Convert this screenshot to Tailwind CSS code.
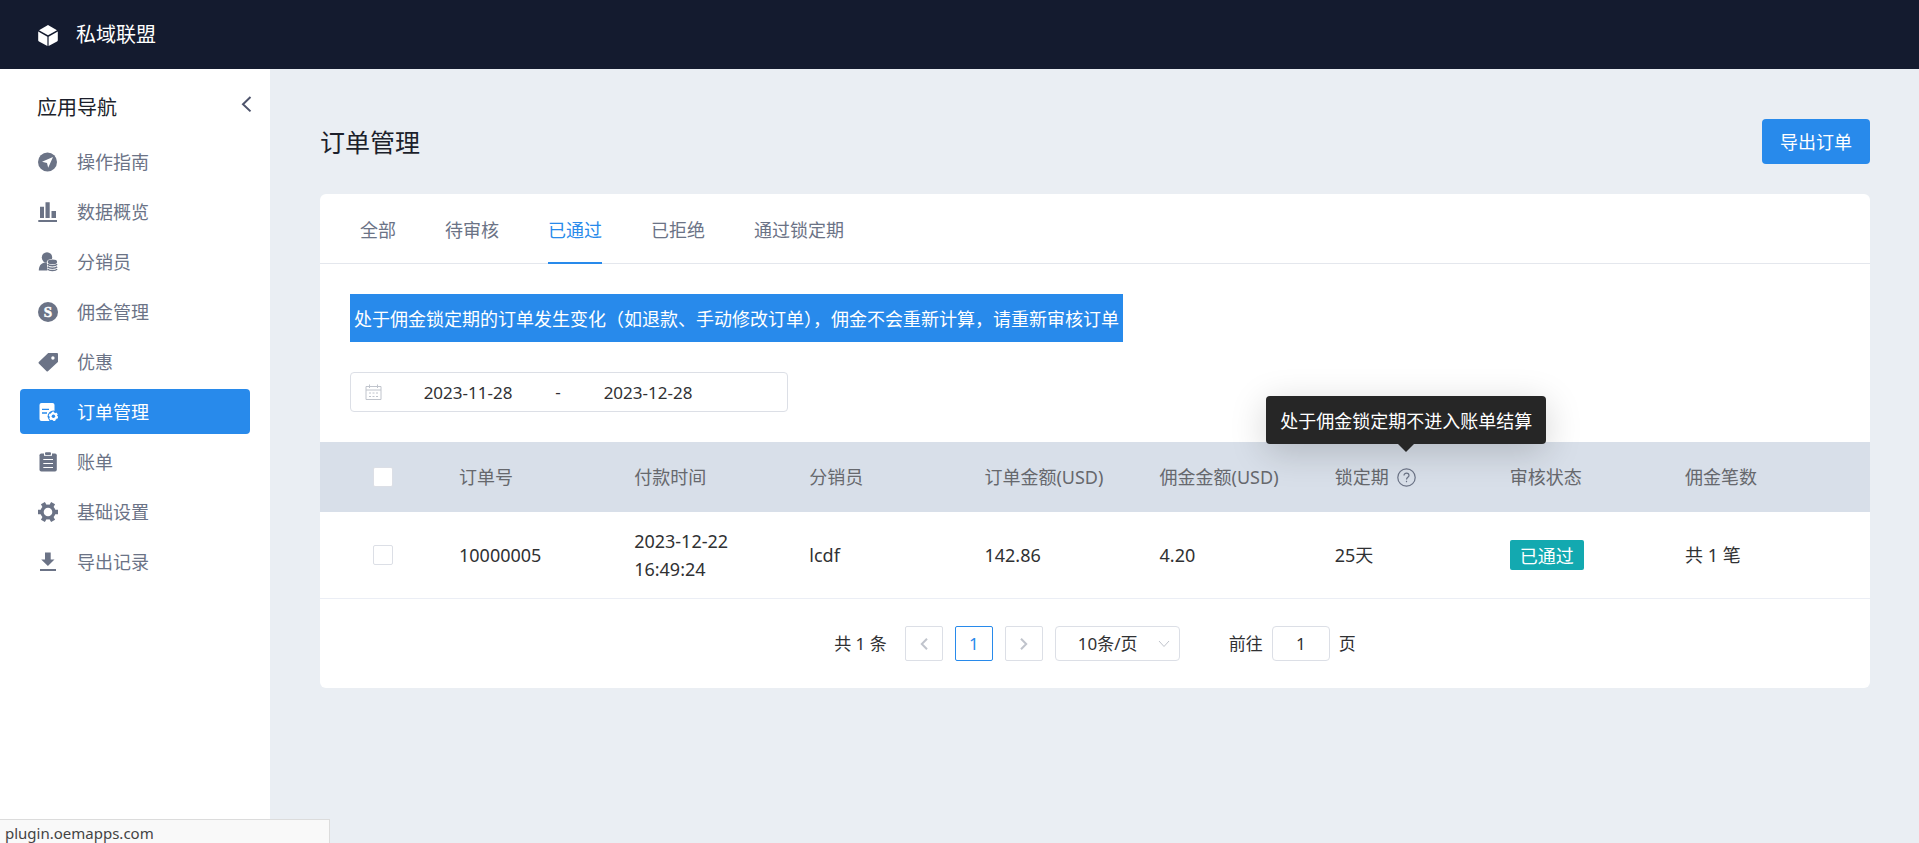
<!DOCTYPE html>
<html lang="zh-CN">
<head>
<meta charset="utf-8">
<meta name="viewport" content="width=device-width, initial-scale=1">
<title>订单管理</title>
<script src="https://cdn.jsdelivr.net/npm/@tailwindcss/browser@4"></script>
</head>
<body class="flex min-h-screen flex-col bg-[#eaeef3] font-['Noto_Sans','Noto_Sans_CJK_SC',sans-serif] text-[#303133]">

<header class="flex h-[69px] shrink-0 items-center gap-[18px] bg-[#141b2f] px-[38px] pt-px text-xl text-white">
  <svg class="h-[21px] w-5" viewBox="0 0 20 21" fill="currentColor" aria-hidden="true"><path d="M10 0 19 5.2 10 10.3 1 5.2z"/><path d="M.2 6.5 9.4 11.7V21L1 16.5a1.5 1.5 0 0 1-.8-1.3z"/><path d="M19.8 6.5 10.6 11.7V21L19 16.5a1.5 1.5 0 0 0 .8-1.3z"/></svg>
  <span>私域联盟</span>
</header>

<div class="flex flex-1">
  <aside class="w-[270px] shrink-0 bg-white">
    <div class="flex items-start justify-between pt-[25px] pr-[15px] pl-[37px]">
      <h2 class="text-xl leading-7 text-[#1c1f2b]">应用导航</h2>
      <button type="button" aria-label="收起导航" class="p-0.5 text-[#4d536b]">
        <svg class="h-[18px] w-3.5" viewBox="0 0 14 18" fill="none" stroke="currentColor" stroke-width="2" aria-hidden="true"><path d="M11.5 1 4 8.200l7.500 7.200"/></svg>
      </button>
    </div>
    <nav class="mt-[17px] flex flex-col gap-[5px] px-5 text-lg text-[#6b7386]">
      <a href="#" class="flex h-[45px] items-center gap-[19px] rounded px-[18px] pt-px">
        <svg class="size-5" viewBox="0 0 20 20" aria-hidden="true"><circle cx="9.500" cy="10" r="9.500" fill="currentColor"/><path d="M15 5 4 9.700l5 1.300 1.200 4.800z" fill="#fff"/></svg>
        操作指南</a>
      <a href="#" class="flex h-[45px] items-center gap-[19px] rounded px-[18px] pt-px">
        <svg class="size-5" viewBox="0 0 20 20" fill="currentColor" aria-hidden="true"><path d="M2 4.700h4V16H2zM7.500 .3h4.200V16H7.500zM13.500 9H18v7h-4.500zM.3 18H19v2H.3z"/></svg>
        数据概览</a>
      <a href="#" class="flex h-[45px] items-center gap-[19px] rounded px-[18px] pt-px">
        <svg class="size-5" viewBox="0 0 20 20" aria-hidden="true"><circle cx="9" cy="5.500" r="5.200" fill="currentColor"/><path d="M.8 18.500C.8 14 3 11.300 6.500 10.500H12v8z" fill="currentColor"/><path d="M8.800 10c0-4 11.200-4 11.200 0v10H9.500z" fill="#fff"/><ellipse cx="14.400" cy="9.900" rx="4.700" ry="2.400" fill="currentColor"/><path d="M9.700 12.300c1.500 2 7.900 2 9.400 0M9.700 14.700c1.500 2 7.900 2 9.400 0M9.700 17.100c1.500 2 7.900 2 9.400 0" fill="none" stroke="currentColor" stroke-width="1.500"/></svg>
        分销员</a>
      <a href="#" class="flex h-[45px] items-center gap-[19px] rounded px-[18px] pt-px">
        <svg class="size-5" viewBox="0 0 20 20" aria-hidden="true"><circle cx="10" cy="10" r="10" fill="currentColor"/><text x="10" y="15" text-anchor="middle" font-family="Liberation Serif, serif" font-size="15" font-weight="700" fill="#fff" stroke="#fff" stroke-width=".5">S</text></svg>
        佣金管理</a>
      <a href="#" class="flex h-[45px] items-center gap-[19px] rounded px-[18px] pt-px">
        <svg class="size-5" viewBox="0 0 20 20" aria-hidden="true"><path d="M10.200 1H19a1 1 0 0 1 1 1v7.500a1 1 0 0 1-.4.8L9.900 19.200a1 1 0 0 1-1.300 0L.8 11.500a1 1 0 0 1 0-1.400z" fill="currentColor"/><circle cx="14.900" cy="6" r="1.700" fill="#fff"/></svg>
        优惠</a>
      <a href="#" aria-current="page" class="flex h-[45px] items-center gap-[19px] rounded bg-[#288aeb] px-[18px] pt-px text-white">
        <svg class="size-5" viewBox="0 0 20 20" aria-hidden="true"><rect x="1.500" y="1" width="15" height="18" rx="2" fill="currentColor"/><path d="M4 7.300h7M4 11h5" stroke="#288aeb" stroke-width="1.300"/><circle cx="15.400" cy="14.300" r="5.800" fill="#288aeb"/><circle cx="15.400" cy="14.300" r="3.900" fill="currentColor"/><circle cx="15.400" cy="14.300" r="3.900" fill="none" stroke="currentColor" stroke-width="1.600" stroke-dasharray="2.100 1.984"/><circle cx="15.400" cy="14.300" r="1.700" fill="#288aeb"/></svg>
        订单管理</a>
      <a href="#" class="flex h-[45px] items-center gap-[19px] rounded px-[18px] pt-px">
        <svg class="size-5" viewBox="0 0 20 20" aria-hidden="true"><rect x="1.500" y="1.500" width="17.300" height="18" rx="1.800" fill="currentColor"/><path d="M6 1h8v2.800H6z" fill="#fff"/><rect x="7" y=".3" width="6" height="2.700" rx="1" fill="currentColor"/><path d="M5.300 7.500H15M5.300 11.500H15M5.300 15.500H15" stroke="#fff" stroke-width="1"/></svg>
        账单</a>
      <a href="#" class="flex h-[45px] items-center gap-[19px] rounded px-[18px] pt-px">
        <svg class="size-5" viewBox="0 0 20 20" aria-hidden="true"><circle cx="10" cy="10" r="7.600" fill="currentColor"/><path d="M0 10h20M4.900 1.200l10.200 17.600M15.100 1.200 4.900 18.800" stroke="currentColor" stroke-width="4.600"/><circle cx="10" cy="10" r="4.300" fill="#fff"/></svg>
        基础设置</a>
      <a href="#" class="flex h-[45px] items-center gap-[19px] rounded px-[18px] pt-px">
        <svg class="size-5" viewBox="0 0 20 20" fill="currentColor" aria-hidden="true"><path d="M7 .5h5.700v7h3.800L9.900 14 3.200 7.500H7zM2 17h16v2H2z"/></svg>
        导出记录</a>
    </nav>
  </aside>

  <main class="min-w-0 flex-1 pt-[50px] pr-[49px] pb-12 pl-[50px]">
    <div class="flex items-center justify-between">
      <h1 class="text-[25px] leading-9 text-[#1c1f2b]">订单管理</h1>
      <button type="button" class="h-[45px] rounded bg-[#288aeb] px-[18px] pt-px text-lg text-white">导出订单</button>
    </div>

    <section class="mt-[30px] rounded-md bg-white">
      <div role="tablist" class="flex h-[70px] gap-[49px] border-b border-[#e4e7ed] px-10 text-lg text-[#6b7386]">
        <button type="button" role="tab" aria-selected="false" class="-mb-px border-b-2 border-transparent pt-1">全部</button>
        <button type="button" role="tab" aria-selected="false" class="-mb-px border-b-2 border-transparent pt-1">待审核</button>
        <button type="button" role="tab" aria-selected="true" class="-mb-px border-b-2 border-[#288aeb] pt-1 text-[#288aeb]">已通过</button>
        <button type="button" role="tab" aria-selected="false" class="-mb-px border-b-2 border-transparent pt-1">已拒绝</button>
        <button type="button" role="tab" aria-selected="false" class="-mb-px border-b-2 border-transparent pt-1">通过锁定期</button>
      </div>

      <div class="flex flex-col items-start gap-[30px] p-[30px]">
        <p class="bg-[#288aeb] px-1 pt-[11px] pb-[9px] text-lg leading-7 text-white">处于佣金锁定期的订单发生变化（如退款、手动修改订单），佣金不会重新计算，请重新审核订单</p>
        <div class="flex h-10 w-[438px] items-center rounded border border-[#dcdfe6] pl-3.5 text-[17px]">
          <svg class="size-[17px] shrink-0 text-[#c0c4cc]" viewBox="0 0 17 17" fill="none" stroke="currentColor" aria-hidden="true"><path d="M1 2.500h15v13H1zM1 6h15M4.500 .5v3.500M12.500 .5v3.500M4 9h2M7.500 9h2M11 9h2M4 12.500h2M7.500 12.500h2M11 12.500h2"/></svg>
          <input type="text" aria-label="开始日期" value="2023-11-28" class="w-[172px] pt-0.5 text-center">
          <span class="w-2 text-center">-</span>
          <input type="text" aria-label="结束日期" value="2023-12-28" class="w-[172px] pt-0.5 text-center">
        </div>
      </div>

      <table class="w-full table-fixed text-left text-lg leading-7">
        <colgroup>
          <col class="w-[127px]"><col class="w-[11.300%]"><col class="w-[11.300%]"><col class="w-[11.300%]"><col class="w-[11.300%]"><col class="w-[11.300%]"><col class="w-[11.300%]"><col class="w-[11.300%]"><col>
        </colgroup>
        <thead class="bg-[#d8dfe9] text-[#66686d]">
          <tr class="h-[70px]">
            <th class="px-[53px]"><input type="checkbox" aria-label="全选" class="block size-5 appearance-none rounded-xs border border-[#dcdfe6] bg-white"></th>
            <th class="px-3 font-normal">订单号</th>
            <th class="px-3 font-normal">付款时间</th>
            <th class="px-3 font-normal">分销员</th>
            <th class="px-3 font-normal whitespace-nowrap">订单金额(USD)</th>
            <th class="px-3 font-normal whitespace-nowrap">佣金金额(USD)</th>
            <th class="px-3 font-normal">
              <div class="flex items-center gap-2">锁定期
                <span class="relative text-[#6b7386]">
                  <svg class="size-[19px]" viewBox="0 0 19 19" fill="none" stroke="currentColor" stroke-width="1.200" aria-hidden="true"><circle cx="9.500" cy="9.500" r="8.700"/><path d="M7 7.500c0-3.200 5-3.200 5 0 0 1.800-2.500 1.800-2.500 4"/><path d="M9.500 12.800v1.400"/></svg>
                  <span role="tooltip" class="absolute bottom-[43px] left-1/2 -translate-x-1/2 rounded bg-[#262626] px-3.5 pt-[11px] pb-[9px] text-lg leading-7 whitespace-nowrap text-white shadow-[0_8px_36px_rgba(0,0,0,0.18)]">处于佣金锁定期不进入账单结算
                    <svg class="absolute top-full left-1/2 h-2 w-4 -translate-x-1/2 text-[#262626]" viewBox="0 0 16 8" fill="currentColor" aria-hidden="true"><path d="M0 0h16L8 8z"/></svg>
                  </span>
                </span>
              </div>
            </th>
            <th class="px-3 font-normal">审核状态</th>
            <th class="px-3 font-normal">佣金笔数</th>
          </tr>
        </thead>
        <tbody>
          <tr class="border-b border-[#ebeef5]">
            <td class="px-[53px]"><input type="checkbox" aria-label="选择订单 10000005" class="block size-5 appearance-none rounded-xs border border-[#dcdfe6] bg-white"></td>
            <td class="px-3">10000005</td>
            <td class="px-3 py-[15px]">2023-12-22<br>16:49:24</td>
            <td class="px-3">lcdf</td>
            <td class="px-3">142.86</td>
            <td class="px-3">4.20</td>
            <td class="px-3">25天</td>
            <td class="px-3"><span class="flex h-[30px] w-fit items-center rounded-xs bg-[#13a9b0] px-2.5 pt-px text-white">已通过</span></td>
            <td class="px-3">共 1 笔</td>
          </tr>
        </tbody>
      </table>

      <div class="flex items-center justify-center pt-[27px] pb-[27px] text-[17px]">
        <span class="mr-[18px]">共 1 条</span>
        <div class="flex gap-3">
          <button type="button" disabled aria-label="上一页" class="flex h-[35px] w-[38px] items-center justify-center rounded-xs border border-[#dcdfe6] text-[#c0c4cc]"><svg class="h-3 w-2" viewBox="0 0 8 12" fill="none" stroke="currentColor" stroke-width="2" aria-hidden="true"><path d="M7 .8 1.800 6 7 11.200"/></svg></button>
          <button type="button" aria-current="page" class="h-[35px] w-[38px] rounded-xs border border-[#288aeb] text-[#288aeb]">1</button>
          <button type="button" disabled aria-label="下一页" class="flex h-[35px] w-[38px] items-center justify-center rounded-xs border border-[#dcdfe6] text-[#c0c4cc]"><svg class="h-3 w-2" viewBox="0 0 8 12" fill="none" stroke="currentColor" stroke-width="2" aria-hidden="true"><path d="M1 .8 6.200 6 1 11.200"/></svg></button>
          <div class="relative">
            <select aria-label="每页条数" class="h-[35px] w-[125px] appearance-none rounded border border-[#dcdfe6] bg-white pr-8 pl-[22px]"><option>10条/页</option></select>
            <svg class="pointer-events-none absolute top-3.5 right-2.5 h-2 w-3" viewBox="0 0 12 8" fill="none" stroke="#c0c4cc" aria-hidden="true"><path d="M1 1l5 5.500L11 1"/></svg>
          </div>
        </div>
        <label class="ml-[49px] flex items-center gap-[9px]">前往
          <input type="text" value="1" aria-label="页码" class="h-[35px] w-[58px] rounded border border-[#dcdfe6] text-center">
          页</label>
      </div>
    </section>
  </main>
</div>

<div class="fixed bottom-0 left-0 h-6 w-[330px] border-t border-r border-[#dcdcdc] bg-[#f9f9f9] pl-[5px] text-[15px] leading-[26px] text-[#444]">plugin.oemapps.com</div>
</body>
</html>
